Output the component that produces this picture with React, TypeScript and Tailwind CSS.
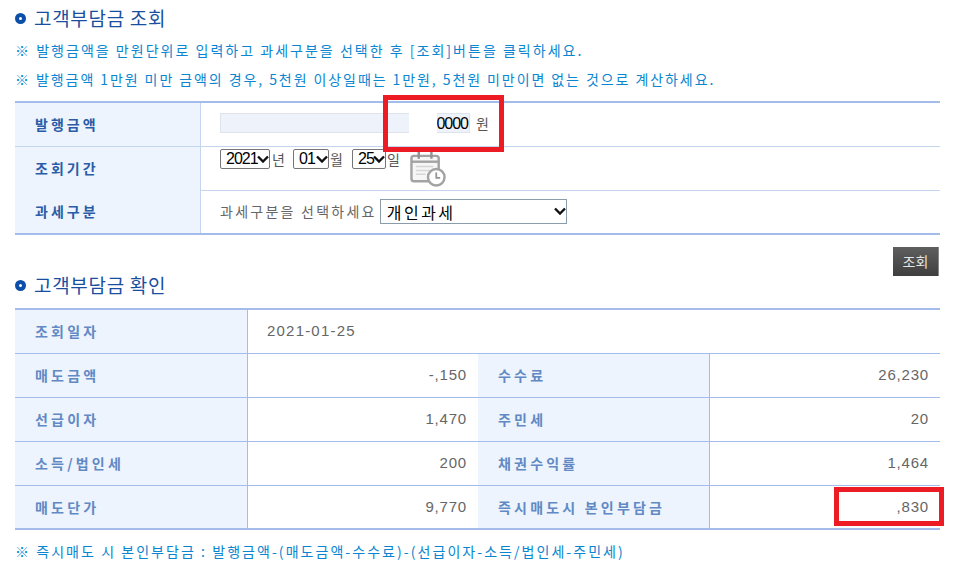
import React from "react";

const font = "font-['Noto_Sans_CJK_KR','Noto_Sans',sans-serif]";

// section heading with the round blue bullet
const Title = ({ text, className }: { text: string; className: string }) => (
    <h2 className={`flex items-center gap-[8px] ${className}`}>
        <span className="w-[11px] h-[11px] rounded-full border-[4px] border-[#0b4fa8] bg-white" />
        <span className="text-[19px] leading-[24px] font-normal text-[#1a4fa0] tracking-[0.7px]">
            {text}
        </span>
    </h2>
);

const Note = ({ text, className }: { text: string; className: string }) => (
    <p className={`text-[14px] leading-[18px] text-[#0a86d0] ${className}`}>
        {text}
    </p>
);

const CalendarIcon = () => (
    <svg width="36" height="36" viewBox="0 0 37 37" fill="none" className="ml-[10px] mt-[2px]">
        <rect x="1.5" y="5" width="28" height="26" rx="2.5" fill="#f6f6f6" stroke="#a3a3a3" strokeWidth="2.5" />
        <path d="M1.5 11h28" stroke="#a3a3a3" strokeWidth="2.5" />
        <path d="M9 1v7M22 1v7" stroke="#949494" strokeWidth="2.5" />
        <path d="M6 16h18M6 20h14M6 24h10" stroke="#d6d6d6" strokeWidth="1.5" />
        <circle cx="27" cy="27" r="8.5" fill="#fff" stroke="#a3a3a3" strokeWidth="2.5" />
        <path d="M27 22v5.5h4" stroke="#949494" strokeWidth="1.8" />
    </svg>
);

const Chevron = () => (
    <svg
        width="12"
        height="8"
        viewBox="0 0 12 8"
        fill="none"
        className="absolute right-[1px] top-1/2 -translate-y-1/2 pointer-events-none"
    >
        <path d="M1 1.5l5 5 5-5" stroke="#111" strokeWidth="2.4" />
    </svg>
);

const DateSelect = ({ value, widthClass }: { value: string; widthClass: string }) => (
    <span className={`relative h-[20px] ${widthClass}`}>
        <select
            defaultValue={value}
            className="appearance-none block w-full h-full pl-[5px] border border-[#767676] rounded-[2px] bg-white text-[16px] leading-[18px] text-black tracking-[-1px] font-['Liberation_Sans',sans-serif]"
        >
            <option>{value}</option>
        </select>
        <Chevron />
    </span>
);

const Label = ({ text, strong, className = "" }: { text: string; strong?: boolean; className?: string }) => (
    <div
        className={`flex items-center pl-[20px] bg-[#edf4fd] text-[14px] font-bold ${
            strong ? "text-[#2a5ca8] tracking-[3px]" : "text-[#6189c4] tracking-[3.2px]"
        } ${className}`}
    >
        {text}
    </div>
);

const Value = ({ text }: { text: string }) => (
    <div className="flex items-center justify-end pr-[11px] bg-white text-[15px] text-[#666] tracking-[0.8px] font-['Liberation_Sans',sans-serif] border-l border-[#a3bcec]">
        {text}
    </div>
);

const rows = [
    ["매도금액", "-,150", "수수료", "26,230"],
    ["선급이자", "1,470", "주민세", "20"],
    ["소득/법인세", "200", "채권수익률", "1,464"],
    ["매도단가", "9,770", "즉시매도시 본인부담금", ",830"],
];

export default function App() {
    return (
        <div className={`relative w-[966px] h-[577px] overflow-hidden bg-white pl-[15px] pr-[26px] pt-[6px] ${font}`}>
            <Title text="고객부담금 조회" className="h-[24px]" />
            <Note text="※ 발행금액을 만원단위로 입력하고 과세구분을 선택한 후 [조회]버튼을 클릭하세요." className="mt-[11px] tracking-[2.02px]" />
            <Note text="※ 발행금액 1만원 미만 금액의 경우, 5천원 이상일때는 1만원, 5천원 미만이면 없는 것으로 계산하세요." className="mt-[11px] tracking-[1.92px]" />

            {/* search form */}
            <div className="mt-[13px] grid grid-cols-[185px_1fr] grid-rows-[44px_44px_42px] border-t-2 border-b-2 border-[#a3bcec]">
                <Label text="발행금액" strong className="border-b border-[#c5d5ee]" />
                <div className="flex items-center pl-[19px] pb-[3px] border-l border-b border-[#c5d5ee]">
                    <div className="relative w-[250px] h-[20px] pr-[1px] bg-[#eef2fb] border border-[#dfe3ec] text-right text-[16px] leading-[19px] tracking-[-1px] font-['Liberation_Sans',sans-serif] text-black">
                        0000
                        <span className="absolute left-[188px] top-[-1px] w-[28px] h-[22px] bg-white" />
                    </div>
                    <span className="ml-[6px] text-[14px] text-[#555]">원</span>
                </div>
                <Label text="조회기간" strong className="pb-[2px]" />
                <div className="flex items-start pl-[19px] pt-[2px] border-l border-b border-[#c5d5ee] text-[14px] leading-[20px] text-[#555]">
                    <DateSelect value="2021" widthClass="w-[50px]" />
                    <span className="w-[23px] pl-[2px]">년</span>
                    <DateSelect value="01" widthClass="w-[36px]" />
                    <span className="w-[23px] pl-[1px]">월</span>
                    <DateSelect value="25" widthClass="w-[34px]" />
                    <span className="pl-[1px]">일</span>
                    <CalendarIcon />
                </div>
                <Label text="과세구분" strong className="pb-[3px] border-t border-[#edf4fd]" />
                <div className="flex items-center pl-[19px] pb-[2px] border-l border-[#c5d5ee] text-[14px] text-[#666] tracking-[2.25px]">
                    과세구분을 선택하세요
                    <span className="relative ml-[3px] w-[187px] h-[25px]">
                        <select
                            defaultValue="개인과세"
                            className="appearance-none block w-full h-full pl-[6px] border border-[#8b9cab] bg-white text-[16px] text-black tracking-[2.5px]"
                        >
                            <option>개인과세</option>
                        </select>
                        <Chevron />
                    </span>
                </div>
            </div>

            <div className="flex justify-end mt-[12px] pr-[1px] h-[29px]">
                <button className="w-[46px] h-[29px] bg-gradient-to-b from-[#5f5f5f] to-[#3f3f3f] text-[14px] text-[#e6e6e6] border-r border-[#888]">
                    조회
                </button>
            </div>

            <Title text="고객부담금 확인" className="-mt-[3px] h-[24px]" />

            {/* result table */}
            <div className="mt-[11px] grid grid-cols-[232px_231px_231px_1fr] grid-rows-[43px_43px_43px_43px_42px] gap-y-[1px] bg-[#a3bcec] border-t-2 border-b-2 border-[#a3bcec]">
                <Label text="조회일자" />
                <div className="col-span-3 flex items-center pl-[19px] bg-white text-[15px] text-[#666] tracking-[1.2px] font-['Liberation_Sans',sans-serif] border-l border-[#a3bcec]">
                    2021-01-25
                </div>
                {rows.map(([a, b, c, d]) => (
                    <React.Fragment key={a}>
                        <Label text={a} />
                        <Value text={b} />
                        <Label text={c} />
                        <Value text={d} />
                    </React.Fragment>
                ))}
            </div>

            <Note
                text="※ 즉시매도 시 본인부담금 : 발행금액-(매도금액-수수료)-(선급이자-소득/법인세-주민세)"
                className="mt-[12px] tracking-[2.05px]"
            />

            {/* red annotation boxes drawn over the capture */}
            <div className="absolute left-[383px] top-[95px] w-[121px] h-[57px] border-[5px] border-[#ed1c24]" />
            <div className="absolute left-[834px] top-[487px] w-[110px] h-[39px] border-[5px] border-[#ed1c24]" />
        </div>
    );
}
